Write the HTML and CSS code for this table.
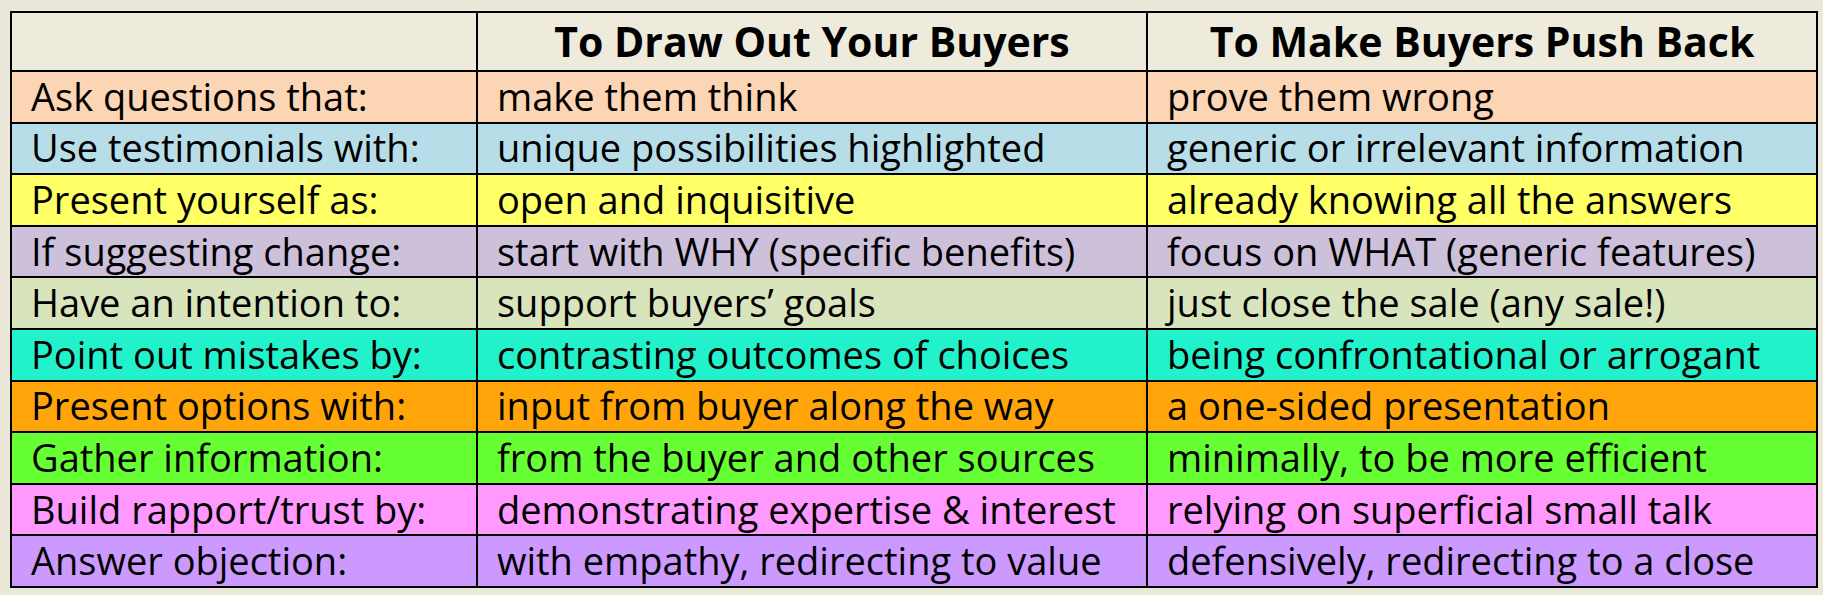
FILE: index.html
```html
<!DOCTYPE html>
<html lang="en">
<head>
<meta charset="utf-8">
<title>Draw Out vs Push Back</title>
<link rel="stylesheet" href="styles.css">
</head>
<body>
<table class="grid">
  <colgroup>
    <col class="c-label">
    <col class="c-draw">
    <col class="c-push">
  </colgroup>
  <thead>
    <tr class="head">
      <th></th>
      <th>To Draw Out Your Buyers</th>
      <th>To Make Buyers Push Back</th>
    </tr>
  </thead>
  <tbody>
    <tr class="r-peach"><td>Ask questions that:</td><td>make them think</td><td>prove them wrong</td></tr>
    <tr class="r-blue"><td>Use testimonials with:</td><td>unique possibilities highlighted</td><td>generic or irrelevant information</td></tr>
    <tr class="r-yellow"><td>Present yourself as:</td><td>open and inquisitive</td><td>already knowing all the answers</td></tr>
    <tr class="r-lilac"><td>If suggesting change:</td><td>start with WHY (specific benefits)</td><td>focus on WHAT (generic features)</td></tr>
    <tr class="r-olive"><td>Have an intention to:</td><td>support buyers’ goals</td><td>just close the sale (any sale!)</td></tr>
    <tr class="r-teal"><td>Point out mistakes by:</td><td>contrasting outcomes of choices</td><td>being confrontational or arrogant</td></tr>
    <tr class="r-orange"><td>Present options with:</td><td>input from buyer along the way</td><td>a one-sided presentation</td></tr>
    <tr class="r-green"><td>Gather information:</td><td>from the buyer and other sources</td><td>minimally, to be more efficient</td></tr>
    <tr class="r-pink"><td>Build rapport/trust by:</td><td>demonstrating expertise &amp; interest</td><td>relying on superficial small talk</td></tr>
    <tr class="r-purple"><td>Answer objection:</td><td>with empathy, redirecting to value</td><td>defensively, redirecting to a close</td></tr>
  </tbody>
</table>
</body>
</html>
```

FILE: styles.css
```css
html, body {
  margin: 0;
  background: #ebe8d9;
}
body {
  padding: 11px 0 0 10px;
  font-family: "Open Sans", "Noto Sans", sans-serif;
  color: #000;
}
.grid {
  border-collapse: collapse;
  table-layout: fixed;
  width: 1806px;
  border: 2px solid #000;
}
.c-label { width: 466px; }
.c-draw { width: 670px; }
.c-push { width: 670px; }

.grid th,
.grid td {
  border: 2px solid #000;
  padding: 0 0 0 19px;
  font-size: 38px;
  line-height: 1;
  white-space: nowrap;
  vertical-align: middle;
  text-align: left;
}
.grid th {
  height: 57px;
  padding: 0;
  text-align: center;
  font-weight: 700;
  font-size: 41px;
  background: #eeeadc;
}
.grid td {
  height: 47.6px;
  padding-bottom: 2px;
}

.r-peach td { background: #fcd5b4; }
.r-blue td { background: #b7dee8; }
.r-yellow td { background: #ffff66; }
.r-lilac td { background: #ccc0da; }
.r-olive td { background: #d8e4bc; }
.r-teal td { background: #22f2cc; }
.r-orange td { background: #ffa50a; }
.r-green td { background: #66ff33; }
.r-pink td { background: #ff99ff; }
.r-purple td { background: #cc99ff; }
```
